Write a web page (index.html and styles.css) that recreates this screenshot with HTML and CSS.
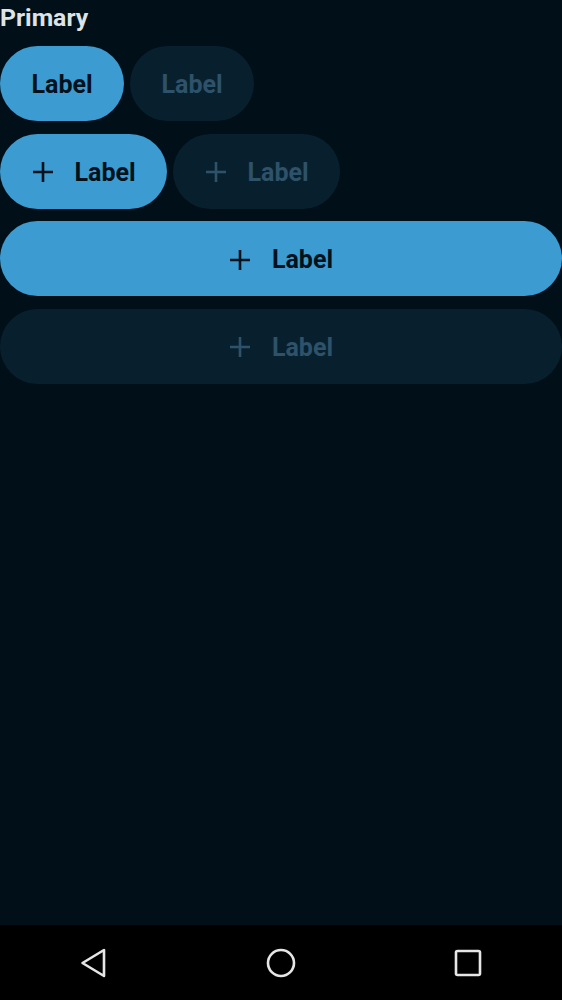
FILE: index.html
```html
<!DOCTYPE html>
<html>
<head>
<meta charset="utf-8">
<link rel="stylesheet" href="styles.css">
</head>
<body>
<div class="screen">
  <main class="content">
    <h1 class="title">Primary</h1>
    <div class="row">
      <button class="btn primary">Label</button>
      <button class="btn disabled">Label</button>
    </div>
    <div class="row">
      <button class="btn primary icon"><svg class="plus" viewBox="0 0 22 22"><path d="M11 1V21M1 11H21"/></svg><span>Label</span></button>
      <button class="btn disabled icon"><svg class="plus" viewBox="0 0 22 22"><path d="M11 1V21M1 11H21"/></svg><span>Label</span></button>
    </div>
    <button class="btn primary icon full"><svg class="plus" viewBox="0 0 22 22"><path d="M11 1V21M1 11H21"/></svg><span>Label</span></button>
    <button class="btn disabled icon full"><svg class="plus" viewBox="0 0 22 22"><path d="M11 1V21M1 11H21"/></svg><span>Label</span></button>
  </main>
  <nav class="navbar">
    <svg class="nav-icon" viewBox="0 0 30 30"><path d="M25 2V28L3.5 15Z"/></svg>
    <svg class="nav-icon" viewBox="0 0 30 30"><circle cx="15" cy="15" r="13"/></svg>
    <svg class="nav-icon" viewBox="0 0 30 30"><rect x="3" y="3" width="24" height="24" rx="1.5"/></svg>
  </nav>
</div>
</body>
</html>
```
FILE: styles.css
```css
* { box-sizing: border-box; }
html, body { margin: 0; padding: 0; }
body {
  background: #000f18;
  font-family: Roboto, "Liberation Sans", sans-serif;
}
.screen {
  width: 562px;
  height: 1000px;
  display: flex;
  flex-direction: column;
}
.content {
  flex: 1;
  display: flex;
  flex-direction: column;
  gap: 12.6px;
}
.title {
  margin: 0;
  color: #dfe3e6;
  font-size: 24.8px;
  font-weight: 700;
  line-height: 35px;
  height: 33.4px;
}
.row {
  display: flex;
  gap: 6px;
}
.btn {
  height: 75px;
  border: none;
  border-radius: 38px;
  padding: 2px 31.5px 0;
  font-family: Roboto, "Liberation Sans", sans-serif;
  font-size: 25px;
  font-weight: 700;
  display: flex;
  align-items: center;
  justify-content: center;
  gap: 21px;
  margin: 0;
}
.btn.primary { background: #3c9bd0; color: #00121c; }
.btn.disabled { background: #08202e; color: #2d5269; }
.btn.full { width: 100%; }
.plus {
  width: 22px;
  height: 22px;
  fill: none;
  stroke: currentColor;
  stroke-width: 2.6;
}
.navbar {
  height: 75px;
  background: #000000;
  display: grid;
  grid-template-columns: 1fr 1fr 1fr;
  justify-items: center;
  align-items: center;
}
.nav-icon {
  width: 30px;
  height: 30px;
  fill: none;
  stroke: #e6e6e6;
  stroke-width: 2.6;
  stroke-linejoin: round;
}
```
